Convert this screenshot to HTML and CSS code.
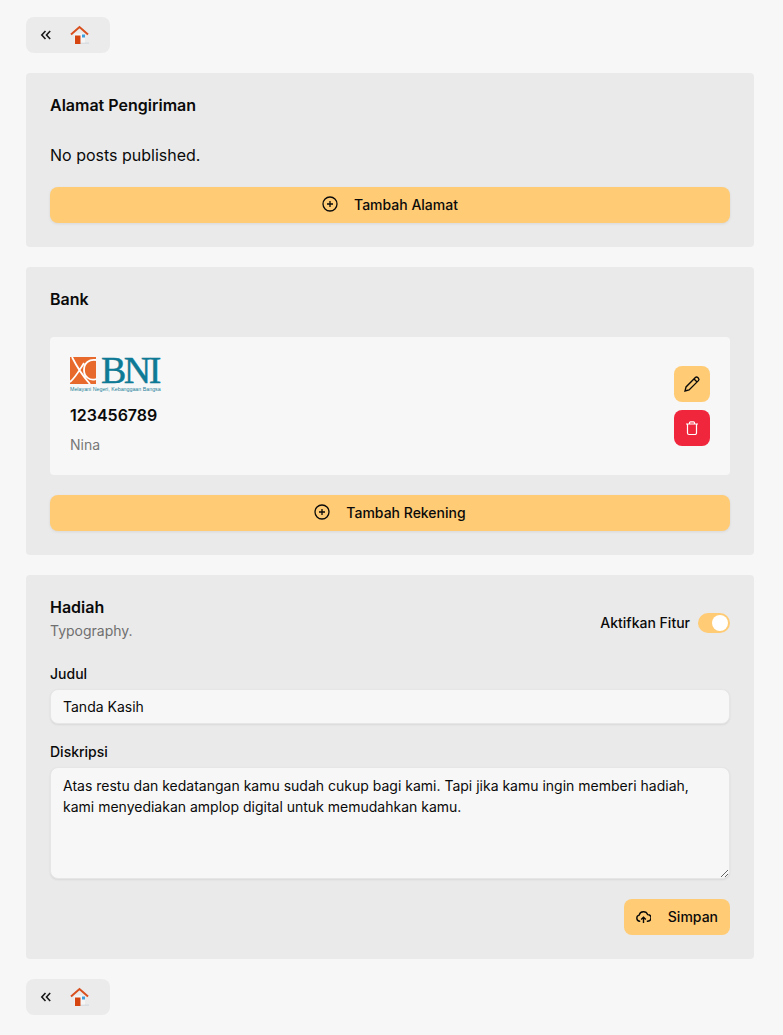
FILE: index.html
```html
<!DOCTYPE html>
<html lang="en">

<head>
    <meta charset="UTF-8">
    <meta name="viewport" content="width=device-width, initial-scale=1.0">
    <title>Pengaturan</title>
    <link rel="stylesheet" href="styles.css">
</head>

<body>
    <div class="page">
        <nav class="nav-pill">
            <svg class="nav-back" viewBox="0 0 12 12" width="12" height="12"><path d="M5.500 2 1.800 6l3.700 4M10.200 2 6.500 6l3.700 4" /></svg>
            <svg class="nav-home" viewBox="0 0 20 20" width="20" height="20"><path class="home-ground" d="M9 17.500h10v1.300H9z" /><path class="home-wall" d="M4.500 8.500h10.500v9H4.500z" /><path class="home-door" d="M5 10.500h5.500v8.500H5z" /><path class="home-win" d="M12 9.500h3v3h-3z" /><path class="home-roof" d="M1 9.500 9.500 2l8.500 7.500" /></svg>
        </nav>

        <section class="panel">
            <h2 class="panel-title">Alamat Pengiriman</h2>
            <p class="empty-text">No posts published.</p>
            <button type="button" class="wide-button">
                <svg class="btn-icon" viewBox="0 0 16 16" width="16" height="16"><circle cx="8" cy="8" r="7" /><path d="M8 5v6M5 8h6" /></svg>
                Tambah Alamat
            </button>
        </section>

        <section class="panel">
            <h2 class="panel-title">Bank</h2>
            <div class="bank-card">
                <div class="bank-info">
                    <div class="bni-logo">
                        <div class="bni-row">
                            <svg class="bni-mark" viewBox="0 0 26 27" width="26" height="27"><rect width="26" height="27" fill="#e8692c" /><path d="M2 0c4 8 9 17 18 27M0 25C6 20 10 12 14 6M26 3c-7-1-12 3-12 10s6 11 12 9" fill="none" stroke="#fff" stroke-width="1.800" /></svg>
                            <span class="bni-word">BNI</span>
                        </div>
                        <div class="bni-tag">Melayani Negeri, Kebanggaan Bangsa</div>
                    </div>
                    <div class="bank-number">123456789</div>
                    <div class="bank-owner">Nina</div>
                </div>
                <div class="bank-actions">
                    <button type="button" class="icon-button icon-edit">
                        <svg viewBox="0 0 16 16" width="18" height="18"><path d="M1.800 14.200l.9-3.600 8.300-8.300a1.500 1.500 0 0 1 2.100 0l.6.6a1.500 1.500 0 0 1 0 2.100l-8.300 8.300zM9.800 3.500l2.700 2.700" /></svg>
                    </button>
                    <button type="button" class="icon-button icon-delete">
                        <svg viewBox="0 0 16 16" width="16" height="16"><path d="M2 4h12M5.500 4V2.800a1 1 0 0 1 1-1h3a1 1 0 0 1 1 1V4M3.500 4v9a1.500 1.500 0 0 0 1.500 1.500h6a1.500 1.500 0 0 0 1.500-1.500V4" /></svg>
                    </button>
                </div>
            </div>
            <button type="button" class="wide-button">
                <svg class="btn-icon" viewBox="0 0 16 16" width="16" height="16"><circle cx="8" cy="8" r="7" /><path d="M8 5v6M5 8h6" /></svg>
                Tambah Rekening
            </button>
        </section>

        <section class="panel">
            <div class="gift-head">
                <div>
                    <h2 class="panel-title">Hadiah</h2>
                    <div class="panel-sub">Typography.</div>
                </div>
                <div class="toggle-row">
                    <span class="toggle-label">Aktifkan Fitur</span>
                    <span class="toggle"><span class="toggle-knob"></span></span>
                </div>
            </div>
            <div class="form-group">
                <label for="judul">Judul</label>
                <input type="text" id="judul" value="Tanda Kasih">
            </div>
            <div class="form-group">
                <label for="diskripsi">Diskripsi</label>
                <textarea id="diskripsi">Atas restu dan kedatangan kamu sudah cukup bagi kami. Tapi jika kamu ingin memberi hadiah, kami menyediakan amplop digital untuk memudahkan kamu.</textarea>
            </div>
            <div class="form-actions">
                <button type="button" class="save-button">
                    <svg class="btn-icon save-icon" viewBox="0 0 16 16" width="15" height="15"><path d="M4.500 13H4a3.300 3.300 0 0 1-.6-6.500 4.700 4.700 0 0 1 9-.5 3.500 3.500 0 0 1 .2 7h-1.100M8 15V9M5.500 11.300 8 8.800l2.500 2.500" /></svg>
                    Simpan
                </button>
            </div>
        </section>

        <nav class="nav-pill">
            <svg class="nav-back" viewBox="0 0 12 12" width="12" height="12"><path d="M5.500 2 1.800 6l3.700 4M10.200 2 6.500 6l3.700 4" /></svg>
            <svg class="nav-home" viewBox="0 0 20 20" width="20" height="20"><path class="home-ground" d="M9 17.500h10v1.300H9z" /><path class="home-wall" d="M4.500 8.500h10.500v9H4.500z" /><path class="home-door" d="M5 10.500h5.500v8.500H5z" /><path class="home-win" d="M12 9.500h3v3h-3z" /><path class="home-roof" d="M1 9.500 9.500 2l8.500 7.500" /></svg>
        </nav>
    </div>
</body>

</html>
```

FILE: styles.css
```css
* {
    box-sizing: border-box;
}

body {
    font-family: Inter, "Liberation Sans", sans-serif;
    background-color: #f7f7f7;
    color: #0a0a0a;
    margin: 0;
}

button {
    font-family: inherit;
    border: none;
    cursor: pointer;
}

.page {
    display: flex;
    flex-direction: column;
    align-items: stretch;
    gap: 20px;
    padding: 17px 29px 21px 26px;
}

.nav-pill {
    display: flex;
    align-items: center;
    gap: 18px;
    width: 84px;
    height: 36px;
    padding-left: 14px;
    background-color: #ebebeb;
    border-radius: 8px;
}

.nav-back {
    fill: none;
    stroke: #1a1a1a;
    stroke-width: 1.600;
}

.home-roof {
    fill: none;
    stroke: #d9501f;
    stroke-width: 2;
}

.home-wall {
    fill: #f5f5f5;
}

.home-door {
    fill: #d6440f;
}

.home-win {
    fill: #3f9fdc;
}

.home-ground {
    fill: #d5dbe0;
}

.panel {
    background-color: #eaeaea;
    border-radius: 4px;
    padding: 20px 24px 24px;
}

.panel-title {
    margin: 0;
    font-size: 16px;
    line-height: 24px;
    font-weight: 600;
}

.panel-sub {
    margin-top: 2px;
    font-size: 14px;
    line-height: 20px;
    color: #6f6f6f;
}

.empty-text {
    margin: 26px 0 20px;
    font-size: 16px;
    line-height: 24px;
}

.wide-button {
    display: flex;
    align-items: center;
    justify-content: center;
    gap: 16px;
    width: 100%;
    height: 36px;
    padding: 0 0 2px;
    font-size: 14px;
    font-weight: 500;
    color: #0a0a0a;
    background-color: #ffcb74;
    border-radius: 8px;
    box-shadow: 0 1px 3px rgba(0, 0, 0, 0.08);
}

.btn-icon {
    fill: none;
    stroke: #0a0a0a;
    stroke-width: 1.300;
}

.save-icon {
    stroke-width: 1.500;
}

.bank-card {
    display: flex;
    align-items: center;
    justify-content: space-between;
    height: 138px;
    margin: 26px 0 20px;
    padding: 19px 20px;
    background-color: #f7f7f7;
    border-radius: 4px;
}

.bank-info {
    align-self: flex-start;
}

.bni-row {
    display: flex;
    align-items: center;
    gap: 5px;
    height: 28px;
}

.bni-word {
    font-family: "Liberation Serif", serif;
    font-size: 38px;
    line-height: 28px;
    letter-spacing: -2.500px;
    color: #0f7a96;
    -webkit-text-stroke: 0.4px #0f7a96;
}

.bni-tag {
    margin-top: 2px;
    font-family: "Liberation Sans", sans-serif;
    font-size: 5.300px;
    line-height: 6px;
    color: #1d7f9a;
    white-space: nowrap;
}

.bank-number {
    margin-top: 11px;
    font-size: 16px;
    line-height: 24px;
    font-weight: 600;
}

.bank-owner {
    margin-top: 7.500px;
    font-size: 14px;
    line-height: 20px;
    color: #777;
}

.bank-actions {
    display: flex;
    flex-direction: column;
    gap: 8px;
}

.icon-button {
    display: flex;
    align-items: center;
    justify-content: center;
    width: 36px;
    height: 36px;
    padding: 0;
    border-radius: 8px;
}

.icon-button svg {
    fill: none;
    stroke-width: 1.200;
}

.icon-edit {
    background-color: #ffcb74;
}

.icon-edit svg {
    stroke: #0a0a0a;
}

.icon-delete {
    background-color: #f0263c;
}

.icon-delete svg {
    stroke: #fff;
}

.gift-head {
    display: flex;
    align-items: center;
    justify-content: space-between;
    margin-bottom: 23px;
}

.toggle-row {
    display: flex;
    align-items: center;
    gap: 8px;
    margin-top: 9px;
}

.toggle-label {
    font-size: 14px;
    font-weight: 500;
}

.toggle {
    display: flex;
    justify-content: flex-end;
    align-items: center;
    width: 32px;
    height: 20px;
    padding: 2px;
    background-color: #ffcb74;
    border-radius: 10px;
}

.toggle-knob {
    width: 16px;
    height: 16px;
    background-color: #fff;
    border-radius: 50%;
}

.form-group {
    margin-bottom: 18px;
}

.form-group label {
    display: block;
    font-size: 14px;
    line-height: 20px;
    font-weight: 500;
    margin-bottom: 5px;
}

.form-group input,
.form-group textarea {
    display: block;
    width: 100%;
    font-family: inherit;
    font-size: 14px;
    line-height: 21px;
    color: #0a0a0a;
    background-color: #f7f7f7;
    border: 1px solid #e6e6e6;
    border-radius: 8px;
    box-shadow: 0 1px 2px rgba(0, 0, 0, 0.08);
}

.form-group input {
    height: 35px;
    padding: 0 12px;
}

.form-group textarea {
    height: 112px;
    padding: 7px 12px;
}

.form-actions {
    display: flex;
    justify-content: flex-end;
    margin-top: 20px;
}

.save-button {
    display: flex;
    align-items: center;
    gap: 17px;
    height: 36px;
    padding: 0 12px 2px;
    font-size: 14px;
    font-weight: 500;
    color: #0a0a0a;
    background-color: #ffcb74;
    border-radius: 8px;
}
```
